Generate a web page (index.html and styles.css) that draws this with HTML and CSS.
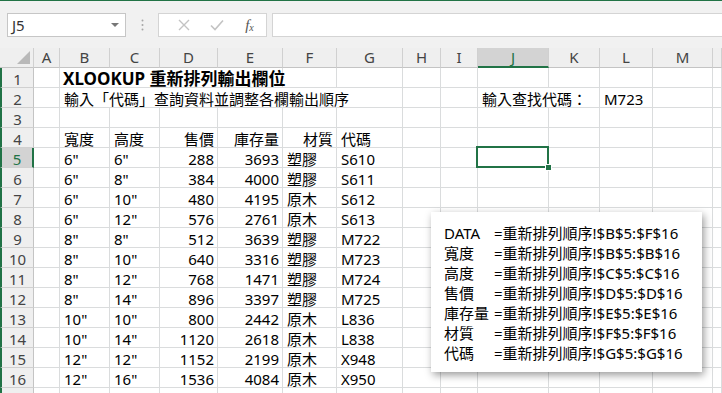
FILE: index.html
```html
<!DOCTYPE html>
<html lang="zh-Hant">
<head>
  <meta charset="UTF-8">
  <meta name="viewport" content="width=device-width, initial-scale=1.0">
  <title>XLOOKUP 重新排列輸出欄位</title>
  <link rel="stylesheet" href="styles.css">
</head>
<body>
  <div class="bar">
    <div class="namebox"><span>J5</span><span class="drop"></span></div>
    <div class="grip">
      <svg width="3" height="12" viewBox="0 0 3 12"><circle cx="1.5" cy="1.5" r="1" fill="#a6a6a6"/><circle cx="1.5" cy="6" r="1" fill="#a6a6a6"/><circle cx="1.5" cy="10.5" r="1" fill="#a6a6a6"/></svg>
    </div>
    <div class="fxbox">
      <span class="btn">
        <svg width="12" height="12" viewBox="0 0 12 12"><path d="M1 1 L11 11 M11 1 L1 11" stroke="#c3c3c3" stroke-width="1.4" fill="none"/></svg>
      </span>
      <span class="btn">
        <svg width="14" height="12" viewBox="0 0 14 12"><path d="M1 6.5 L5 10.5 L13 1.5" stroke="#c3c3c3" stroke-width="1.6" fill="none"/></svg>
      </span>
      <span class="btn fx">f<small>x</small></span>
    </div>
    <div class="formula"></div>
  </div>

  <div class="sheet" id="sheet"></div>

  <div class="note">
    <div><span class="lbl">DATA</span>=重新排列順序!$B$5:$F$16</div>
    <div><span class="lbl">寬度</span>=重新排列順序!$B$5:$B$16</div>
    <div><span class="lbl">高度</span>=重新排列順序!$C$5:$C$16</div>
    <div><span class="lbl">售價</span>=重新排列順序!$D$5:$D$16</div>
    <div><span class="lbl">庫存量</span>=重新排列順序!$E$5:$E$16</div>
    <div><span class="lbl">材質</span>=重新排列順序!$F$5:$F$16</div>
    <div><span class="lbl">代碼</span>=重新排列順序!$G$5:$G$16</div>
  </div>

  <script>
    const letters = ['A', 'B', 'C', 'D', 'E', 'F', 'G', 'H', 'I', 'J', 'K', 'L', 'M', ''];
    // [column, text, class, span]
    const rows = {
      1: [['B', 'XLOOKUP 重新排列輸出欄位', 'title', 4]],
      2: [['B', '輸入「代碼」查詢資料並調整各欄輸出順序', '', 6], ['J', '輸入查找代碼：', '', 2], ['L', 'M723']],
      4: [['B', '寬度'], ['C', '高度'], ['D', '售價', 'r'], ['E', '庫存量', 'r'], ['F', '材質', 'r'], ['G', '代碼']]
    };
    const items = [
      ['6"', '6"', 288, 3693, '塑膠', 'S610'],
      ['6"', '8"', 384, 4000, '塑膠', 'S611'],
      ['6"', '10"', 480, 4195, '原木', 'S612'],
      ['6"', '12"', 576, 2761, '原木', 'S613'],
      ['8"', '8"', 512, 3639, '塑膠', 'M722'],
      ['8"', '10"', 640, 3316, '塑膠', 'M723'],
      ['8"', '12"', 768, 1471, '塑膠', 'M724'],
      ['8"', '14"', 896, 3397, '塑膠', 'M725'],
      ['10"', '10"', 800, 2442, '原木', 'L836'],
      ['10"', '14"', 1120, 2618, '原木', 'L838'],
      ['12"', '12"', 1152, 2199, '原木', 'X948'],
      ['12"', '16"', 1536, 4084, '原木', 'X950']
    ];
    items.forEach((item, i) => {
      rows[i + 5] = item.map((v, j) => [letters[j + 1], String(v), typeof v === 'number' ? 'r' : '']);
    });

    const sheet = document.getElementById('sheet');
    const add = (cls, text) => {
      const el = document.createElement('div');
      el.className = cls;
      if (text) el.textContent = text;
      sheet.appendChild(el);
      return el;
    };

    const corner = add('hd corner');
    corner.innerHTML = '<svg width="13" height="13" viewBox="0 0 13 13"><polygon points="13,0 13,13 0,13" fill="#b9b9b9"/></svg>';
    letters.forEach(l => add(l === 'J' ? 'hd on' : 'hd', l));

    // row 17 only peeks in at the bottom edge, its number is out of view
    for (let r = 1; r <= 17; r++) {
      add(r === 5 ? 'rh on' : 'rh', r < 17 ? String(r) : '');
      const cells = rows[r] || [];
      for (let c = 0; c < letters.length; c++) {
        const spec = cells.find(s => s[0] === letters[c]);
        let cls = 'c';
        if (spec && spec[2]) cls += ' ' + spec[2];
        if (r === 5 && letters[c] === 'J') cls += ' sel';
        const el = add(cls, spec ? spec[1] : '');
        if (spec && spec[3]) {
          el.style.gridColumn = 'span ' + spec[3];
          c += spec[3] - 1;
        }
      }
    }
  </script>
</body>
</html>
```

FILE: styles.css
```css
html, body { margin: 0; padding: 0; }
body {
  position: relative;
  width: 722px;
  height: 393px;
  overflow: hidden;
  background: #ffffff;
  font-family: "Noto Sans", "Noto Sans CJK TC", sans-serif;
  font-size: 15px;
  color: #000000;
}

/* formula bar */
.bar {
  display: flex;
  align-items: flex-start;
  height: 48px;
  box-sizing: border-box;
  padding: 12px 0 0 7px;
  background: #f1f1f1;
  border-top: 1px solid #217346;
}
.namebox {
  display: flex;
  align-items: center;
  justify-content: space-between;
  width: 119px;
  height: 24px;
  box-sizing: border-box;
  padding: 0 6px 0 4px;
  background: #ffffff;
  border: 1px solid #c6c6c6;
  color: #333333;
}
.drop {
  width: 0;
  height: 0;
  border-left: 4px solid transparent;
  border-right: 4px solid transparent;
  border-top: 4px solid #777777;
}
.grip {
  display: flex;
  align-items: center;
  justify-content: center;
  width: 32px;
  height: 24px;
}
.fxbox {
  display: flex;
  align-items: center;
  width: 109px;
  height: 24px;
  box-sizing: border-box;
  padding-left: 8px;
  background: #ffffff;
  border: 1px solid #d4d4d4;
}
.btn {
  display: flex;
  align-items: center;
  justify-content: center;
  width: 35px;
  height: 22px;
}
.fx {
  font-family: "Liberation Serif", "DejaVu Serif", serif;
  font-style: italic;
  font-size: 15px;
  color: #555555;
}
.fx small { font-size: 10px; margin-top: 5px; }
.formula {
  flex: 1;
  height: 24px;
  margin-left: 5px;
  box-sizing: border-box;
  background: #ffffff;
  border: 1px solid #d4d4d4;
  border-right: none;
}

/* grid */
.sheet {
  display: grid;
  grid-template-columns: 34px 26px 50px 50px 58px 65px 54px 66px 38px 37px 71px 51px 53px 60px 1fr;
  grid-auto-rows: 20px;
}
.hd, .rh {
  box-sizing: border-box;
  background: #efefef;
  color: #444444;
  text-align: center;
  line-height: 20px;
  white-space: nowrap;
}
.hd {
  border-right: 1px solid #d0d0d0;
  border-bottom: 1px solid #c4c4c4;
  line-height: 19px;
}
.corner {
  display: flex;
  align-items: flex-end;
  justify-content: flex-end;
  padding: 0 3px 3px 0;
}
.rh {
  border-left: 2px solid #217346;
  border-right: 1px solid #c4c4c4;
  border-bottom: 1px solid #d0d0d0;
  padding-top: 1px;
}
.hd.on {
  background: #d3d3d3;
  color: #217346;
  border-bottom: 2px solid #217346;
}
.rh.on {
  background: #d3d3d3;
  color: #217346;
  border-right: 2px solid #217346;
}
.c {
  position: relative;
  box-sizing: border-box;
  padding: 1px 3px 0 4px;
  border-right: 1px solid #dadcdd;
  border-bottom: 1px solid #dadcdd;
  line-height: 20px;
  white-space: nowrap;
}
.c.r { text-align: right; padding-right: 3px; }
.c.title {
  font-size: 17px;
  font-weight: 700;
  line-height: 19px;
  padding-left: 3px;
}
.sel::after {
  content: "";
  position: absolute;
  left: -2px;
  top: -2px;
  right: -1px;
  bottom: -1px;
  border: 2px solid #217346;
}
.sel::before {
  content: "";
  position: absolute;
  right: -4px;
  bottom: -4px;
  width: 5px;
  height: 5px;
  background: #217346;
  border: 1px solid #ffffff;
  z-index: 1;
}

/* text box */
.note {
  position: absolute;
  left: 431px;
  top: 212px;
  width: 271px;
  height: 160px;
  box-sizing: border-box;
  padding: 11px 0 0 13px;
  background: #ffffff;
  box-shadow: 2px 3px 8px rgba(0, 0, 0, 0.4);
  line-height: 20px;
  white-space: nowrap;
  z-index: 2;
}
.lbl { display: inline-block; width: 50px; }
```
